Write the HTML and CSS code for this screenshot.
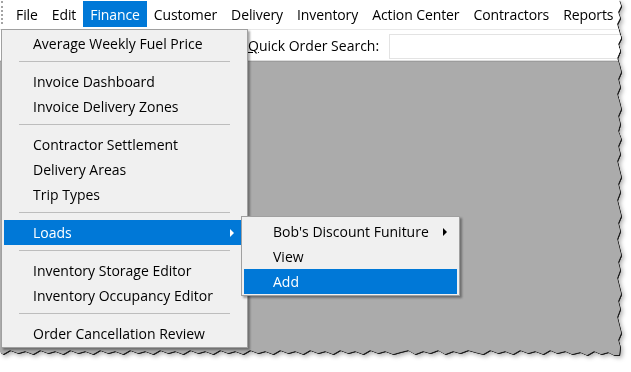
FILE: index.html
```html
<!DOCTYPE html>
<html lang="en">
<head>
    <meta charset="UTF-8">
    <meta name="viewport" content="width=device-width, initial-scale=1.0">
    <title>Finance Menu</title>
    <link rel="stylesheet" href="styles.css">
</head>
<body>

    <div class="paper">
        <div class="shot">

            <!-- Main menu strip -->
            <div class="menubar">
                <span class="grip"></span>
                <span class="menu-item">File</span>
                <span class="menu-item">Edit</span>
                <span class="menu-item active">Finance</span>
                <span class="menu-item">Customer</span>
                <span class="menu-item">Delivery</span>
                <span class="menu-item">Inventory</span>
                <span class="menu-item">Action Center</span>
                <span class="menu-item">Contractors</span>
                <span class="menu-item">Reports</span>
            </div>

            <!-- Tool strip with quick search -->
            <div class="toolbar">
                <label for="quickSearch"><u>Q</u>uick Order Search:</label>
                <input type="text" id="quickSearch">
            </div>

            <div class="workspace"></div>

            <!-- Finance drop down -->
            <div class="dropdown finance-menu">
                <div class="menu-row">Average Weekly Fuel Price</div>
                <div class="sep"></div>
                <div class="menu-row">Invoice Dashboard</div>
                <div class="menu-row">Invoice Delivery Zones</div>
                <div class="sep"></div>
                <div class="menu-row">Contractor Settlement</div>
                <div class="menu-row">Delivery Areas</div>
                <div class="menu-row">Trip Types</div>
                <div class="sep"></div>
                <div class="menu-row hl">Loads <span class="arrow"></span></div>
                <div class="sep"></div>
                <div class="menu-row">Inventory Storage Editor</div>
                <div class="menu-row">Inventory Occupancy Editor</div>
                <div class="sep"></div>
                <div class="menu-row">Order Cancellation Review</div>
            </div>

            <!-- Loads sub menu -->
            <div class="dropdown loads-menu">
                <div class="menu-row">Bob's Discount Funiture <span class="arrow"></span></div>
                <div class="menu-row">View</div>
                <div class="menu-row hl">Add</div>
            </div>

        </div>
    </div>

</body>
</html>
```

FILE: styles.css
```css
body {
    margin: 0;
    background: #fff;
    font-family: "Open Sans", "Noto Sans", sans-serif;
    font-size: 14px;
    color: #000;
}

/* torn screenshot edge */
.paper {
    width: 628px;
    height: 364px;
    filter: drop-shadow(1px 1px 0 rgba(0, 0, 0, 0.85)) drop-shadow(2px 2px 2px rgba(0, 0, 0, 0.3));
}
.shot {
    position: relative;
    width: 622px;
    height: 357px;
    display: flex;
    flex-direction: column;
    background: #ababab;
    clip-path: polygon(0 0, 619px 0, 621px 6px, 618px 12px, 620px 18px, 617px 24px, 619px 31px, 621px 38px, 618px 44px, 620px 51px, 617px 58px, 619px 64px, 621px 72px, 618px 79px, 620px 87px, 617px 94px, 619px 101px, 621px 109px, 618px 116px, 620px 124px, 618px 131px, 621px 139px, 618px 146px, 620px 154px, 617px 161px, 619px 169px, 621px 177px, 618px 184px, 620px 192px, 617px 200px, 619px 208px, 621px 216px, 618px 223px, 620px 231px, 617px 239px, 619px 247px, 621px 255px, 618px 262px, 620px 270px, 617px 278px, 619px 286px, 621px 294px, 618px 301px, 620px 309px, 617px 317px, 619px 325px, 621px 333px, 618px 340px, 620px 347px, 619px 355px, 614px 355px, 608px 352px, 601px 354px, 594px 351px, 587px 355px, 580px 352px, 572px 354px, 565px 351px, 557px 353px, 550px 350px, 543px 354px, 535px 351px, 528px 353px, 520px 350px, 513px 354px, 505px 351px, 498px 353px, 490px 350px, 483px 354px, 475px 352px, 468px 350px, 460px 353px, 453px 351px, 445px 354px, 438px 350px, 430px 353px, 423px 351px, 415px 354px, 408px 350px, 400px 352px, 393px 354px, 385px 351px, 378px 353px, 370px 350px, 363px 354px, 355px 351px, 348px 353px, 340px 350px, 333px 354px, 325px 351px, 318px 353px, 310px 350px, 303px 354px, 295px 351px, 288px 353px, 280px 350px, 273px 354px, 265px 351px, 258px 353px, 250px 350px, 243px 354px, 235px 351px, 228px 353px, 220px 350px, 213px 354px, 205px 351px, 198px 353px, 190px 350px, 183px 354px, 175px 351px, 168px 353px, 160px 350px, 153px 354px, 145px 351px, 138px 353px, 130px 350px, 123px 354px, 115px 351px, 108px 353px, 100px 350px, 93px 354px, 85px 351px, 78px 353px, 70px 350px, 63px 354px, 55px 351px, 48px 353px, 40px 350px, 33px 354px, 25px 351px, 18px 353px, 10px 350px, 3px 354px, 0 352px);
}

.menubar {
    height: 29px;
    display: flex;
    align-items: flex-start;
    background: #fff;
    border-bottom: 1px solid #e8e8e8;
    letter-spacing: -0.1px;
}
.grip {
    height: 23px;
    margin: 1px 6px 0 1px;
    border-left: 2px dotted #a4a4a4;
}
.menu-item {
    height: 26px;
    line-height: 28px;
    margin-top: 1px;
    padding: 0 7px;
    white-space: nowrap;
}
.menu-item.active {
    background: #0078d7;
    color: #fff;
}

.toolbar {
    height: 30px;
    display: flex;
    align-items: center;
    padding-left: 248px;
    background: #fff;
    border-bottom: 1px solid #dcdcdc;
}
.toolbar label {
    width: 141px;
    flex-shrink: 0;
    white-space: nowrap;
}
.toolbar input {
    flex: 1;
    height: 25px;
    margin: 2px 0 0;
    padding: 0;
    box-sizing: border-box;
    border: 1px solid #e3e3e3;
    outline: none;
}

.workspace {
    flex: 1;
    background: #ababab;
    border-top: 1px solid #9c9c9c;
}

/* menus */
.dropdown {
    position: absolute;
    background: #f0f0f0;
    border: 1px solid #a0a0a0;
    box-shadow: 2px 2px 2px rgba(0, 0, 0, 0.35);
}
.finance-menu {
    left: 1px;
    top: 29px;
    width: 237px;
    padding: 1px 6px 1px 2px;
}
.loads-menu {
    left: 241px;
    top: 216px;
    width: 213px;
    padding: 2px 2px 1px 2px;
}
.menu-row {
    height: 25px;
    display: flex;
    align-items: center;
    padding-left: 29px;
    white-space: nowrap;
}
.menu-row.hl {
    background: #0078d7;
    color: #fff;
}
.sep {
    height: 0;
    margin: 5px 11px 7px 15px;
    border-top: 1px solid #bdbdbd;
}
.arrow {
    margin-left: auto;
    margin-right: 7px;
    border-left: 4px solid currentColor;
    border-top: 4px solid transparent;
    border-bottom: 4px solid transparent;
}
.loads-menu .arrow {
    margin-right: 10px;
}
```
